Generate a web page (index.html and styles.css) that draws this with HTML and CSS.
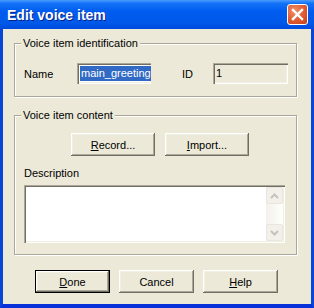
FILE: index.html
```html
<!DOCTYPE html>
<html lang="en">
<head>
    <meta charset="UTF-8">
    <title>Edit voice item</title>
    <link rel="stylesheet" href="styles.css">
</head>
<body>

    <div class="window">
        <!-- Thanh tiêu đề -->
        <div class="titlebar">
            <span class="title">Edit voice item</span>
            <div class="close">
                <svg width="13" height="13" viewBox="0 0 13 13">
                    <path d="M2 2 L11 11 M11 2 L2 11" stroke="#fff" stroke-width="2.4" stroke-linecap="square"/>
                </svg>
            </div>
        </div>

        <div class="client">
            <!-- Nhận dạng -->
            <div class="group group-ident">
                <span class="group-title">Voice item identification</span>
                <div class="ident-row">
                    <span class="label label-name">Name</span>
                    <div class="field field-name"><span class="selected">main_greeting</span></div>
                    <span class="label label-id">ID</span>
                    <div class="field field-id">1</div>
                </div>
            </div>

            <!-- Nội dung -->
            <div class="group group-content">
                <span class="group-title">Voice item content</span>
                <div class="content-buttons">
                    <div class="btn btn-wide"><u>R</u>ecord...</div>
                    <div class="btn btn-wide"><u>I</u>mport...</div>
                </div>
                <div class="label label-desc">Description</div>
                <div class="field memo">
                    <div class="memo-text"></div>
                    <div class="scrollbar">
                        <div class="sb-btn">
                            <svg width="9" height="6" viewBox="0 0 9 6"><path d="M1 5 L4.5 1.5 L8 5" fill="none" stroke="#c3c3bd" stroke-width="2"/></svg>
                        </div>
                        <div class="sb-track"></div>
                        <div class="sb-btn">
                            <svg width="9" height="6" viewBox="0 0 9 6"><path d="M1 1 L4.5 4.5 L8 1" fill="none" stroke="#c3c3bd" stroke-width="2"/></svg>
                        </div>
                    </div>
                </div>
            </div>

            <!-- Nút dưới cùng -->
            <div class="footer">
                <div class="btn btn-default"><u>D</u>one</div>
                <div class="btn">Cancel</div>
                <div class="btn"><u>H</u>elp</div>
            </div>
        </div>
    </div>

</body>
</html>
```

FILE: styles.css
```css
/* Khung chung */
body {
    margin: 0;
    font-family: "Liberation Sans", Arial, sans-serif;
    font-size: 11px;
    color: #000;
}

.window {
    width: 314px;
    height: 308px;
    box-sizing: border-box;
    background: #0055e5;
    border-left: 3px solid #0846d8;
    border-right: 3px solid #0846d8;
    border-bottom: 4px solid #0831d9;
    display: flex;
    flex-direction: column;
}

/* Thanh tiêu đề */
.titlebar {
    height: 29px;
    margin: 0 -3px;
    padding: 0 6px 0 7px;
    display: flex;
    align-items: center;
    justify-content: space-between;
    background: linear-gradient(#4a9cff 0%, #1271f7 12%, #005cef 40%, #0058e8 80%, #004ade 100%);
}

.title {
    color: #fff;
    font-weight: bold;
    font-size: 14px;
    text-shadow: 1px 1px 0 #0a1e86;
}

.close {
    width: 21px;
    height: 21px;
    box-sizing: border-box;
    border: 1px solid #fff;
    border-radius: 3px;
    background: radial-gradient(circle at 35% 30%, #f0906c 0%, #e05a32 55%, #c43d15 100%);
    display: flex;
    align-items: center;
    justify-content: center;
    margin-top: -1px;
}

.client {
    flex: 1;
    background: #ece9d8;
    padding: 14px 0 0 11px;
}

/* Khung nhóm */
.group {
    position: relative;
    width: 283px;
    box-sizing: border-box;
    border: 1px solid #aca899;
    box-shadow: inset 1px 1px 0 #fff, 1px 1px 0 #fff;
}

.group-title {
    position: absolute;
    top: -8px;
    left: 6px;
    padding: 0 2px;
    background: #ece9d8;
    line-height: 14px;
}

.group-ident {
    height: 54px;
}

.group-content {
    height: 140px;
    margin-top: 18px;
    padding: 17px 0 0 9px;
    box-sizing: border-box;
}

.ident-row {
    display: flex;
    align-items: center;
    padding: 19px 0 0 9px;
}

.label-name {
    width: 53px;
}

.label-id {
    width: 31px;
    margin-left: 31px;
}

/* Ô nhập */
.field {
    box-sizing: border-box;
    height: 21px;
    background: #fff;
    box-shadow: inset 1px 1px #aca899, inset 2px 2px #716f64, inset -1px -1px #fff, inset -2px -2px #f1efe2;
    padding: 3px 3px 0 3px;
    line-height: 15px;
    white-space: nowrap;
    overflow: hidden;
}

.field-name {
    width: 74px;
}

.field-id {
    width: 75px;
    background: #ece9d8;
}

.selected {
    background: #316ac5;
    color: #fff;
    display: inline-block;
    padding: 0 1px;
}

/* Nút bấm */
.btn {
    width: 75px;
    height: 23px;
    box-sizing: border-box;
    background: #ece9d8;
    box-shadow: inset -1px -1px #716f64, inset 1px 1px #fff, inset -2px -2px #aca899, inset 2px 2px #f1efe2;
    display: flex;
    align-items: center;
    justify-content: center;
}

.btn-wide {
    width: 84px;
}

.btn-default {
    border: 1px solid #000;
}

.content-buttons {
    display: flex;
    gap: 10px;
    padding-left: 47px;
}

.label-desc {
    margin-top: 11px;
    line-height: 13px;
}

/* Ô mô tả */
.memo {
    width: 261px;
    height: 58px;
    margin-top: 5px;
    padding: 2px;
    display: flex;
}

.memo-text {
    flex: 1;
}

.scrollbar {
    width: 17px;
    display: flex;
    flex-direction: column;
    background: linear-gradient(90deg, #f3f1ec, #fefefb);
}

.sb-btn {
    height: 17px;
    box-sizing: border-box;
    border: 1px solid #e8e6df;
    border-radius: 2px;
    background: #f2f0e8;
    display: flex;
    align-items: center;
    justify-content: center;
}

.sb-track {
    flex: 1;
}

/* Hàng nút dưới */
.footer {
    display: flex;
    gap: 9px;
    margin-top: 15px;
    padding-left: 21px;
}
```
